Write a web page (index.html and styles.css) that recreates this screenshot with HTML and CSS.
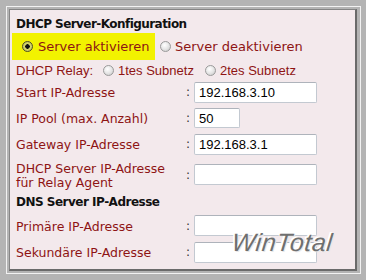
FILE: index.html
```html
<!DOCTYPE html>
<html lang="de">
<head>
    <meta charset="UTF-8">
    <title>DHCP Server-Konfiguration</title>
    <link rel="stylesheet" href="styles.css">
</head>
<body>
    <div class="frame">
        <div class="panel">
            <div class="title">DHCP Server-Konfiguration</div>

            <div class="mode-row">
                <label class="mode-on"><span class="radio checked"></span>Server aktivieren</label>
                <label class="mode-off"><span class="radio"></span>Server deaktivieren</label>
            </div>

            <div class="relay-row">
                <span class="relay-label">DHCP Relay:</span>
                <label class="relay-opt"><span class="radio"></span>1tes Subnetz</label>
                <label class="relay-opt"><span class="radio"></span>2tes Subnetz</label>
            </div>

            <div class="field">
                <span class="label">Start IP-Adresse</span>
                <span class="colon">:</span>
                <input class="ip" type="text" value="192.168.3.10">
            </div>
            <div class="field">
                <span class="label">IP Pool (max. Anzahl)</span>
                <span class="colon">:</span>
                <input class="ip short" type="text" value="50">
            </div>
            <div class="field">
                <span class="label">Gateway IP-Adresse</span>
                <span class="colon">:</span>
                <input class="ip" type="text" value="192.168.3.1">
            </div>
            <div class="field tall">
                <span class="label">DHCP Server IP-Adresse<br>für Relay Agent</span>
                <span class="colon">:</span>
                <input class="ip" type="text" value="">
            </div>

            <div class="section">DNS Server IP-Adresse</div>

            <div class="field dns">
                <span class="label">Primäre IP-Adresse</span>
                <span class="colon">:</span>
                <input class="ip" type="text" value="">
            </div>
            <div class="field">
                <span class="label">Sekundäre IP-Adresse</span>
                <span class="colon">:</span>
                <input class="ip" type="text" value="">
            </div>

            <div class="watermark">WinTotal</div>
        </div>
    </div>
</body>
</html>
```

FILE: styles.css
```css
html, body {
    margin: 0;
    padding: 0;
}

body {
    width: 366px;
    height: 280px;
    background: #b4b4b4;
    box-sizing: border-box;
    padding: 6px 5px 6px 6px;
    font-family: "DejaVu Sans", Verdana, sans-serif;
}

.frame {
    height: 100%;
    box-sizing: border-box;
    border: 1px solid #f2f2f2;
    padding: 2px 3px 2px 2px;
    background: #b4b4b4;
}

.panel {
    position: relative;
    height: 100%;
    box-sizing: border-box;
    background: #f3e9ec;
    border-top: 1px solid #858585;
    border-left: 1px solid #858585;
    border-right: 2px solid #6a6a6a;
    border-bottom: 2px solid #6a6a6a;
    padding: 6px 0 0 6px;
    overflow: hidden;
}

.title {
    font-size: 12px;
    font-weight: bold;
    line-height: 16px;
    letter-spacing: -0.55px;
    color: #111;
}

.section {
    font-size: 12px;
    font-weight: bold;
    line-height: 20px;
    height: 20px;
    letter-spacing: -0.5px;
    color: #111;
}

/* radio buttons */
.radio {
    display: inline-block;
    width: 11px;
    height: 11px;
    box-sizing: border-box;
    border-radius: 50%;
    border: 1px solid #9a9a9a;
    background: radial-gradient(circle at 40% 35%, #ffffff 0%, #e6e6e6 50%, #c4c4c4 100%);
    vertical-align: middle;
    position: relative;
}

.radio.checked {
    border: 1px solid #4d4d2a;
    background: radial-gradient(circle, #111 0 2px, #d8d870 2.5px, #b8b850 100%);
}

.mode-row {
    margin-top: 1px;
    display: flex;
    align-items: center;
    height: 27px;
    font-size: 13px;
    color: #8e1414;
}

.mode-on {
    display: flex;
    align-items: center;
    height: 27px;
    margin-left: -4px;
    width: 143px;
    box-sizing: border-box;
    padding-left: 10px;
    background: #f2f200;
}

.mode-on .radio {
    margin-right: 5px;
}

.mode-off {
    display: flex;
    align-items: center;
    margin-left: 5px;
}

.mode-off .radio {
    margin-right: 4px;
}

.relay-row {
    margin-top: 1px;
    display: flex;
    align-items: center;
    height: 18px;
    font-family: "Liberation Sans", Arial, sans-serif;
    font-size: 13px;
    color: #8e1414;
}

.relay-label {
    width: 87px;
    flex: none;
}

.relay-opt {
    display: flex;
    align-items: center;
    width: 102px;
    flex: none;
}

.relay-opt .radio {
    margin-right: 4px;
}

/* form rows */
.field {
    display: flex;
    align-items: center;
    height: 26px;
}

.field.tall {
    height: 35px;
}

.field.dns {
    height: 27px;
}

.label {
    width: 170px;
    flex: none;
    font-size: 12.5px;
    line-height: 14px;
    color: #8e1414;
    padding-top: 2px;
}

.colon {
    width: 8px;
    flex: none;
    font-size: 12px;
    color: #333;
}

.ip {
    width: 123px;
    height: 21px;
    box-sizing: border-box;
    margin: 0;
    padding: 0 4px;
    border: 1px solid #c3c9d1;
    border-top-color: #aeb3bb;
    border-radius: 2px;
    background: #fff;
    font-family: "Liberation Sans", Arial, sans-serif;
    font-size: 13px;
    color: #000;
    outline: none;
}

.ip.short {
    width: 46px;
    height: 20px;
}

.watermark {
    position: absolute;
    left: 222px;
    top: 220px;
    font-family: "Liberation Sans", Arial, sans-serif;
    font-style: italic;
    font-size: 25px;
    line-height: 25px;
    color: #6f6f6f;
    letter-spacing: 0.6px;
    transform: skewX(-6deg);
    text-shadow: -2px -1px 0 #fff, -1px 0 0 #fff, 1px 1px 0 #e8e8e8;
}
```
